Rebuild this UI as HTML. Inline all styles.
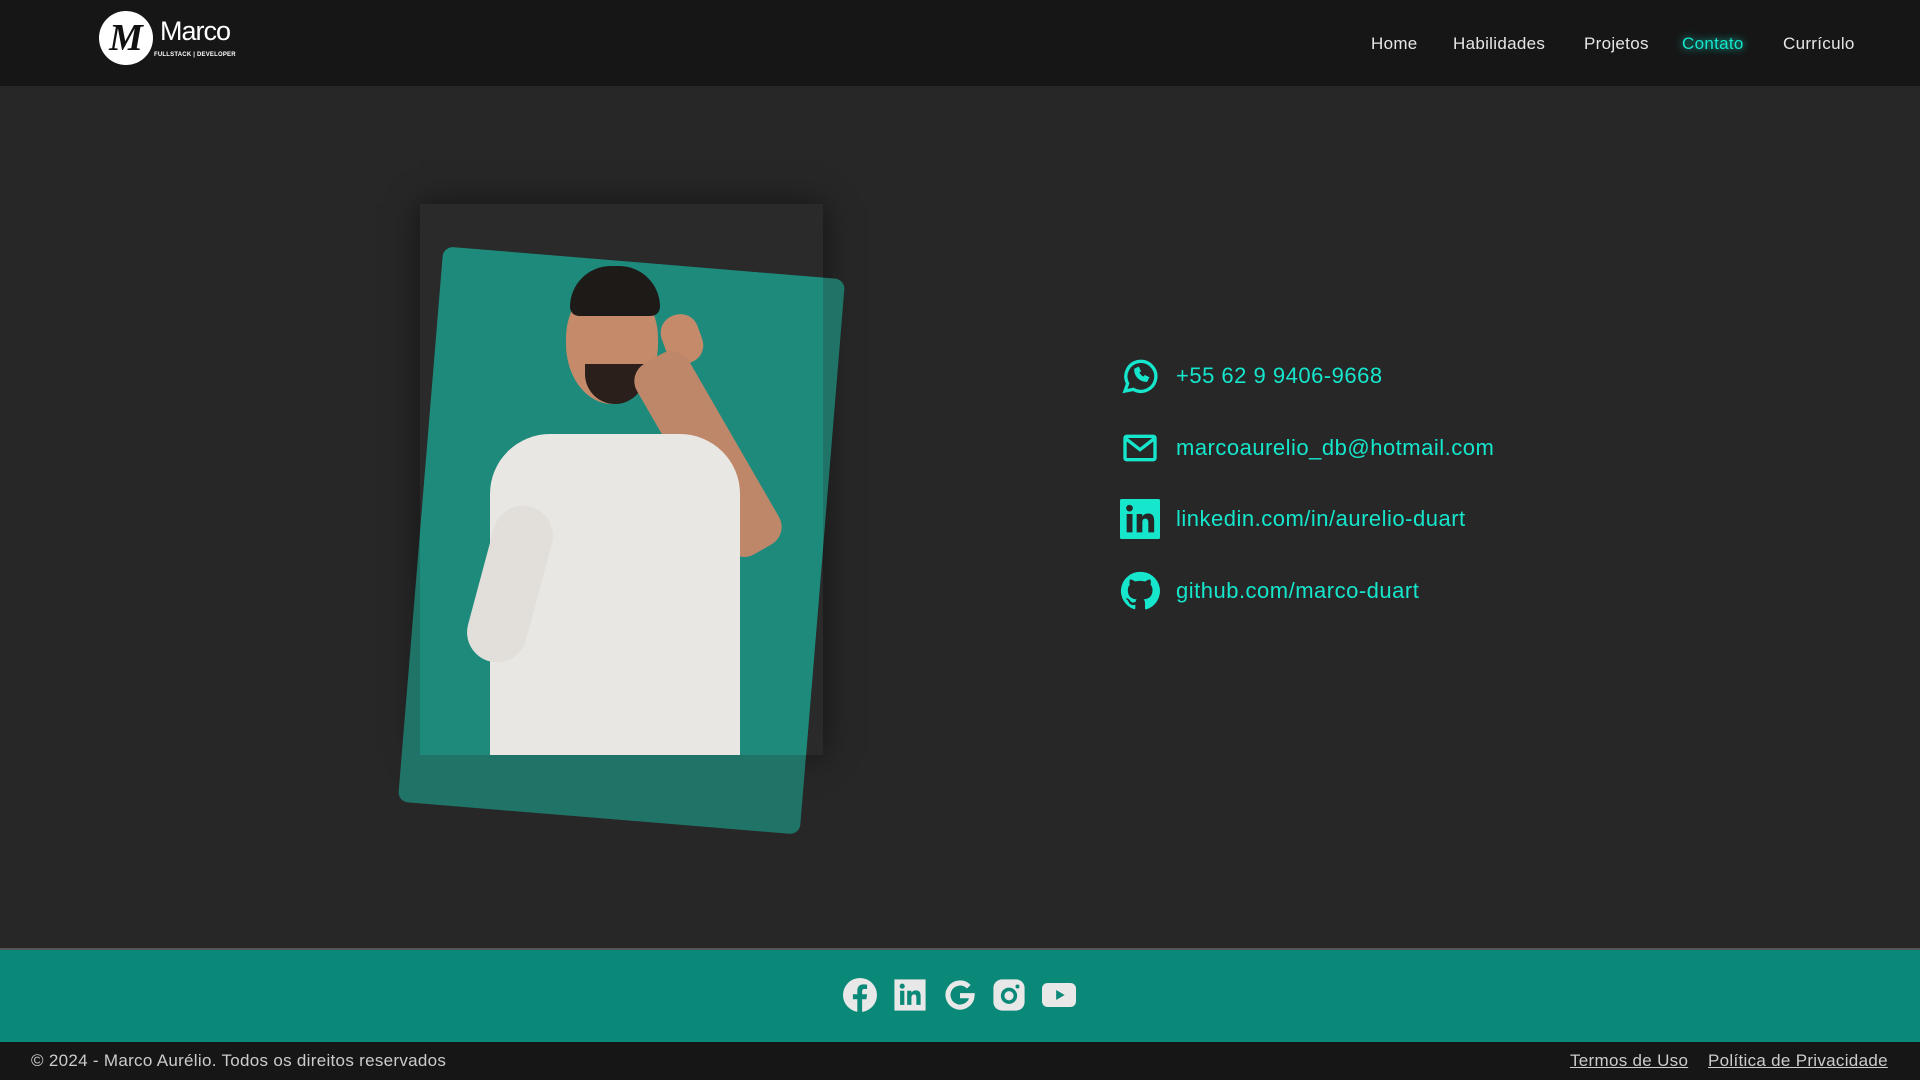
<!DOCTYPE html>
<html><head><meta charset="utf-8"><style>
*{margin:0;padding:0;box-sizing:border-box}
body{width:1920px;height:1080px;overflow:hidden;background:#272727;font-family:"Liberation Sans",sans-serif;position:relative}
header{position:absolute;left:0;top:0;width:1920px;height:86px;background:#161616}
.logo{position:absolute;left:99px;top:11px;width:54px;height:54px;border-radius:50%;background:#fff;color:#111;font:italic bold 38px "Liberation Serif",serif;text-align:center;line-height:54px}
.mt{position:absolute;left:160px;top:16px;color:#fff;font:27px "Liberation Sans",sans-serif;letter-spacing:-1px}
.ms{position:absolute;left:154px;top:52px;color:#fff;font:bold 6px "Liberation Sans",sans-serif;letter-spacing:.2px}
nav a{position:absolute;top:34px;color:#e6e6e6;font-size:17px;text-decoration:none;letter-spacing:.3px}
.c{position:absolute;left:1120px;color:#15e6cc;font-size:22px;letter-spacing:.5px}
.ic{position:absolute;left:1120px;width:40px;height:40px}
footer{position:absolute;left:0;top:948px;width:1920px;height:94px;background:#0a8878;border-top:2px solid #555}
.fi{position:absolute;top:28px;width:34px;height:34px}
.bot{position:absolute;left:0;top:1042px;width:1920px;height:38px;background:#161616;color:#ccc;font-size:17px;letter-spacing:.3px}
</style></head><body>
<header>
<div class="logo">M</div>
<div class="mt">Marco</div>
<div class="ms">FULLSTACK | DEVELOPER</div>
<nav>
<a style="left:1371px">Home</a>
<a style="left:1453px">Habilidades</a>
<a style="left:1584px">Projetos</a>
<a style="left:1682px;color:#15e6cc;text-shadow:0 0 8px #15e6cc">Contato</a>
<a style="left:1783px">Currículo</a>
</nav>
</header>

<div style="position:absolute;left:420px;top:204px;width:403px;height:551px;background:#2a2a2a;box-shadow:0 0 30px rgba(0,0,0,.5)"></div>
<div style="position:absolute;left:420px;top:262px;width:403px;height:557px;background:#1f7467;border-radius:10px;transform:rotate(4.7deg);transform-origin:center"></div>
<div style="position:absolute;left:420px;top:204px;width:403px;height:551px;overflow:hidden">
 <div style="position:absolute;left:0;top:58px;width:403px;height:557px;background:#1d8a7c;border-radius:10px;transform:rotate(4.7deg)"></div>
 <div style="position:absolute;left:146px;top:80px;width:92px;height:120px;border-radius:45% 45% 50% 50%;background:#c48a6a"></div>
 <div style="position:absolute;left:150px;top:62px;width:90px;height:50px;border-radius:45px 45px 10px 10px;background:#1e1a18"></div>
 <div style="position:absolute;left:165px;top:160px;width:60px;height:40px;border-radius:0 0 30px 30px;background:#2a1f1a"></div>
 <div style="position:absolute;left:243px;top:110px;width:38px;height:50px;border-radius:18px;background:#c48a6a;transform:rotate(-20deg)"></div>
 <div style="position:absolute;left:258px;top:140px;width:60px;height:220px;border-radius:20px;background:#bf876a;transform:rotate(-30deg)"></div>
 <div style="position:absolute;left:70px;top:230px;width:250px;height:340px;border-radius:60px 60px 0 0;background:#e9e7e3"></div>
 <div style="position:absolute;left:60px;top:300px;width:60px;height:160px;border-radius:30px;background:#e2dfda;transform:rotate(15deg)"></div>
</div>

<svg class="ic" style="top:356px" viewBox="0 0 24 24" fill="none" stroke="#15e6cc" stroke-width="2"><path d="M3 21l1.6-4.5A9 9 0 1 1 8 20z"/><path d="M9 8c0 4 3 7 7 7l1-2-2-1-1 1c-1-.5-2.5-2-3-3l1-1-1-2z" fill="#15e6cc" stroke-width="1"/></svg>
<div class="c" style="left:1176px;top:363px">+55 62 9 9406-9668</div>
<svg class="ic" style="top:428px" viewBox="0 0 24 24" fill="none" stroke="#15e6cc" stroke-width="2"><rect x="3" y="5" width="18" height="14" rx="1"/><path d="M3 6l9 7 9-7"/></svg>
<div class="c" style="left:1176px;top:435px">marcoaurelio_db@hotmail.com</div>
<svg class="ic" style="top:499px" viewBox="0 0 24 24"><rect width="24" height="24" rx="1" fill="#15e6cc"/><rect x="4" y="9" width="3.5" height="11" fill="#272727"/><circle cx="5.7" cy="5.5" r="2" fill="#272727"/><path d="M10 9h3.3v1.6c.6-1.1 2-1.9 3.6-1.9 3 0 3.6 2 3.6 4.6V20H17v-5.5c0-1.3-.2-2.7-1.8-2.7s-1.8 1.3-1.8 2.6V20H10z" fill="#272727"/></svg>
<div class="c" style="left:1176px;top:506px">linkedin.com/in/aurelio-duart</div>
<svg class="ic" style="top:571px" viewBox="0 0 24 24"><path fill="#15e6cc" d="M12 .5a11.5 11.5 0 0 0-3.6 22.4c.6.1.8-.2.8-.6v-2c-3.2.7-3.9-1.5-3.9-1.5-.5-1.3-1.3-1.7-1.3-1.700-1-.7.1-.7.1-.7 1.2.1 1.8 1.2 1.8 1.2 1 1.8 2.7 1.3 3.4 1 .1-.8.4-1.3.7-1.6-2.6-.3-5.3-1.3-5.3-5.7 0-1.3.5-2.3 1.2-3.1-.1-.3-.5-1.5.1-3.1 0 0 1-.3 3.2 1.2a11 11 0 0 1 5.8 0c2.2-1.5 3.200-1.2 3.2-1.2.6 1.6.2 2.8.1 3.1.8.8 1.2 1.9 1.2 3.1 0 4.4-2.7 5.4-5.3 5.7.4.4.8 1.1.8 2.2v3.2c0 .3.2.7.8.6A11.5 11.5 0 0 0 12 .5z"/></svg>
<div class="c" style="left:1176px;top:578px">github.com/marco-duart</div>

<footer>
<svg class="fi" style="left:843px" viewBox="0 0 24 24"><circle cx="12" cy="12" r="12" fill="#e8e8e8"/><path d="M13.5 24v-9h3l.5-3.5h-3.5V9.5c0-1 .3-1.7 1.8-1.7H17V4.7c-.3 0-1.4-.2-2.6-.2-2.6 0-4.3 1.6-4.3 4.5v2.5H7V15h3.1v9z" fill="#0a8878"/></svg>
<svg class="fi" style="left:893px" viewBox="0 0 24 24"><rect x="1" y="1" width="22" height="22" fill="#e8e8e8"/><rect x="5" y="9" width="3" height="10" fill="#0a8878"/><circle cx="6.5" cy="5.8" r="1.8" fill="#0a8878"/><path d="M10 9h3v1.4c.6-1 1.8-1.7 3.2-1.7 2.7 0 3.3 1.8 3.3 4.2V19h-3v-5c0-1.2-.2-2.4-1.6-2.4S13 12.8 13 14v5h-3z" fill="#0a8878"/></svg>
<svg class="fi" style="left:943px" viewBox="0 0 24 24"><path d="M18.2 6.2A8.5 8.5 0 1 0 20.5 12.5H12" fill="none" stroke="#e8e8e8" stroke-width="3.6"/></svg>
<svg class="fi" style="left:992px" viewBox="0 0 24 24"><rect x="1" y="1" width="22" height="22" rx="6" fill="#e8e8e8"/><circle cx="12" cy="12.5" r="4.5" fill="none" stroke="#0a8878" stroke-width="2.5"/><circle cx="18" cy="6" r="1.4" fill="#0a8878"/></svg>
<svg class="fi" style="left:1042px" viewBox="0 0 24 24"><rect x="0" y="3.5" width="24" height="17" rx="4" fill="#e8e8e8"/><path d="M10 8.5v7l6-3.5z" fill="#0a8878"/></svg>
</footer>
<div class="bot">
<span style="position:absolute;left:31px;top:9px">© 2024 - Marco Aurélio. Todos os direitos reservados</span>
<span style="position:absolute;left:1570px;top:9px;text-decoration:underline">Termos de Uso</span>
<span style="position:absolute;left:1708px;top:9px;text-decoration:underline">Política de Privacidade</span>
</div>
</body></html>
